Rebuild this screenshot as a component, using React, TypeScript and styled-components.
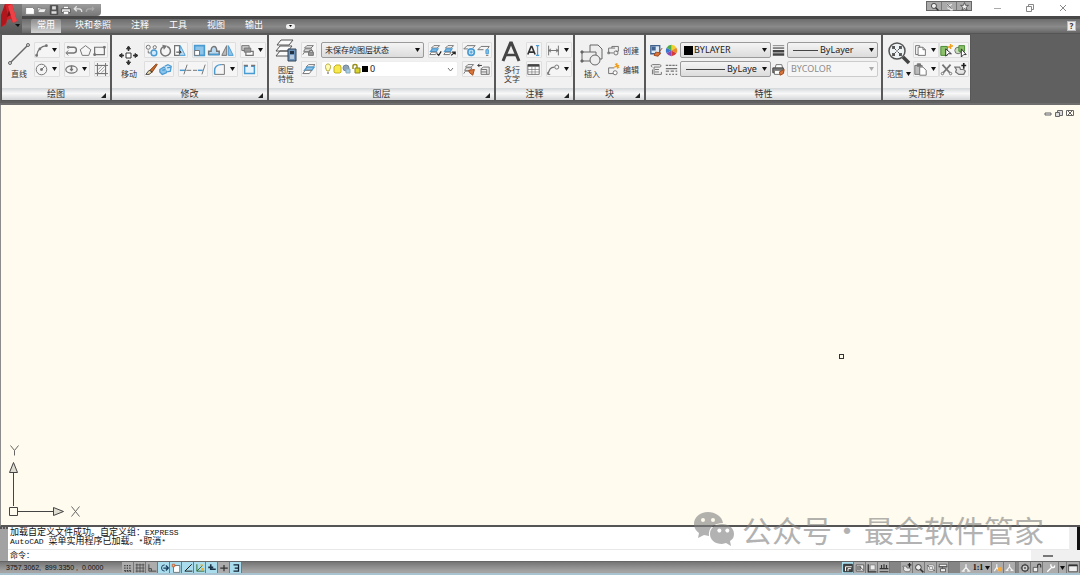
import React from "react";
import styled, { createGlobalStyle, css } from "styled-components";

const GlobalStyle = createGlobalStyle`
  * { box-sizing: border-box; }
  body { margin: 0; background: #fff; }
  button, select, input { font: inherit; color: inherit; margin: 0; padding: 0; border: 0; background: none; }
  body, button, select, input { font-family: "Noto Sans", "Noto Sans CJK SC", sans-serif; }
`;

const G = "#747474";
const B = "#4b9bd3";

/* Small glyphs, all on a 16 x 16 grid */
const glyphs: Record<string, React.ReactNode> = {
  arc: <><path d="M2 14C3 8 7 3 14 2" strokeWidth="1.600" /><path d="M1 13h2v2H1zM13 1h2v2h-2zM5 5h2v2H5z" fill={G} /></>,
  polyline: <><path d="M5 4h6c4 0 4 7 0 7H2" strokeWidth="1.800" /><path d="M4 8l-3 3 3 3M3 3h2v2H3z" /></>,
  polygon: <path d="M8 2l6.500 5-2.500 7h-8L1.500 7z" />,
  rect: <><path d="M2 4h12v9H2z" strokeWidth="1.500" /><path d="M1 12h2v2H1zM13 3h2v2h-2z" fill={G} /></>,
  circle: <><circle cx="8" cy="8" r="6.500" /><path d="M8 8l4-4" /><path d="M7 7h2v2H7z" fill={G} /></>,
  ellipse: <><ellipse cx="8" cy="8" rx="7" ry="4.500" strokeWidth="1.500" /><path d="M8 3v7M6 8h4" strokeWidth="1.800" /></>,
  hatch: <><path d="M3 3h10v10H3zM0 3h16M3 0v16M13 0v16M0 13h16" /><path d="M4 8l4-4M4 12l8-8M8 12l4-4" strokeWidth=".8" /></>,
  copy: <><circle cx="4" cy="4" r="2.500" /><circle cx="12" cy="4" r="2" /><path d="M4 8v3h3" /><circle cx="11" cy="11" r="3.500" stroke={B} fill="#d5ebfa" strokeWidth="1.800" /></>,
  rotate: <><path d="M5 3.500A6 6 0 1 0 10 3" strokeWidth="1.800" /><path d="M4 1l6 1-4 5z" fill={G} stroke="none" /></>,
  stretch: <><path d="M2 2h6v12H2z" fill="#fff" strokeWidth="1.500" /><path d="M9 2l6 12H8z" fill="#b9dcf4" stroke={B} strokeWidth="1.200" /><path d="M4 10h6M8 8l2 2-2 2" stroke="#333" /></>,
  scale: <><path d="M2 2h12v12H2z" fill="#8cc4ea" stroke={B} strokeWidth="2" /><path d="M2 8h6v6H2z" fill="#fff" /></>,
  offset: <><path d="M2 13V9h3c0-8 7-8 7 0h3v4z" fill="#b9dcf4" strokeWidth="1.800" /><path d="M2 13h13" stroke={B} strokeWidth="2" /></>,
  mirror: <><path d="M7 2v12H1z" fill="#bbb" /><path d="M9 2v12h6z" fill="#8cc4ea" stroke={B} /></>,
  order: <><path d="M1 2h9v6H1z" fill="#ccc" /><path d="M6 9h9v5H6z" fill="#fff" strokeWidth="1.500" /><path d="M4 5h8v5H4z" fill="#999" /></>,
  erase: <><path d="M14 1l1 1-6 9-3-2z" fill="#c96a2a" stroke="#8a4517" /><path d="M5 9l4 2-4 3H1z" fill="#eed9a8" stroke="#444" /></>,
  explode: <><path d="M1 8l5-3 4 2-1 5-5 2-3-3z" fill="#8cc4ea" stroke={B} strokeWidth="1.600" /><path d="M7 4l4-2 4 2-1 6-4 1M4 9l4-1M10 6l5-1" stroke={B} fill="#cbe5f7" strokeWidth="1.600" /></>,
  trim: <><path d="M1 9h7" stroke={B} strokeWidth="1.800" /><path d="M9 9h6M10 2L6 14" /></>,
  extend: <><path d="M0 9h5" /><path d="M6 9h6" stroke={B} strokeWidth="1.800" /><path d="M15 2l-4 12" /></>,
  fillet: <><path d="M2 14V9c0-4 3-7 8-7" stroke={B} strokeWidth="1.800" /><path d="M2 14h12V2h-4" /></>,
  join: <><path d="M6 4H2v9h12V4h-4" stroke={B} strokeWidth="1.800" fill="#e6f3fb" /><path d="M6 3h-5M15 3h-5" strokeWidth="2" /></>,
  layerLock: <><path d="M3 5l3-3h8l-3 3zM2 9l2-3h8l-2 3zM1 13l2-3h5" fill="#eee" /><path d="M8 10h6v4H8z" fill="#999" /><path d="M9 10V8h4v2" /></>,
  layers: <><path d="M5 5l3-3h8l-3 3z" fill="#fff" /><path d="M3 9l3-4h9l-3 4z" fill="#8cc4ea" stroke={B} strokeWidth="1.500" /><path d="M1 13l3-4h8l-3 4z" fill="#fff" /></>,
  layersCheck: <><path d="M3 5l3-3h7l-3 3z" fill="#fff" /><path d="M2 9l2-3h7l-2 3z" fill="#8cc4ea" stroke={B} strokeWidth="1.500" /><path d="M1 13l2-3h7l-2 3z" fill="#fff" /><path d="M10 12l2 2 3-5" stroke="#222" strokeWidth="1.500" /></>,
  layersArrow: <><path d="M3 5l3-3h7l-3 3z" fill="#fff" /><path d="M2 9l2-3h7l-2 3z" fill="#8cc4ea" stroke={B} strokeWidth="1.500" /><path d="M1 13l2-3h7l-2 3z" fill="#fff" /><path d="M10 14l5-4M11 10h4v3" stroke="#222" strokeWidth="1.500" /></>,
  layerFreeze: <><path d="M1 6l4-4h10l-3 3M1 6h5" /><circle cx="10" cy="10" r="4" stroke={B} fill="#d5ebfa" strokeWidth="2" /><path d="M8 10h4M10 8v4" stroke={B} /></>,
  layerOff: <><path d="M1 7l4-4h10l-2 3M1 7h7" /><path d="M11 7h3v5h-3z" stroke={B} fill="#8cc4ea" /><path d="M11 14h3" /></>,
  layerBrush: <><path d="M3 5l3-3h7l-3 3zM2 9l2-3h7l-2 3zM1 13l2-3h5" fill="#fff" /><path d="M7 9l7-1-2 7-4-3z" fill="#d9763b" stroke="#a44a1d" /></>,
  layerPrev: <><path d="M1 3h5M3 1L1 3l2 2" stroke="#333" /><path d="M5 7l3-2h7v9H5zM5 8h7M5 11h7M12 8v6" fill="#eee" /></>,
  textEdit: <><path d="M1 13L5 3h1l4 10M3 10h5" stroke="#333" strokeWidth="2" /><path d="M11 2h4M13 2v12M11 14h4" stroke={B} strokeWidth="1.500" /></>,
  dimension: <path d="M2 2v12M14 2v12M2 8h12M5 6L2 8l3 2M11 6l3 2-3 2" />,
  table: <><path d="M1 2h14v12H1z" fill="#fff" /><path d="M1 3h14" stroke="#444" strokeWidth="3" /><path d="M1 8h14M1 11h14M6 4v10M10 4v10" strokeWidth=".8" /></>,
  leader: <><path d="M1 14C3 8 4 5 9 5" strokeWidth="1.500" /><path d="M1 11v3h3" /><circle cx="12" cy="5" r="2.500" /></>,
  blockMake: <><path d="M2 11V5h8M2 11h6" /><path d="M6 5V3h8v6h-3" /><circle cx="11" cy="11" r="2.500" /><path d="M1 10h2v2H1z" /></>,
  blockEdit: <><path d="M9 6H2v7h6" /><circle cx="10" cy="12" r="2.500" fill="#fff" /><path d="M9 5l6-2M12 0l1 7M10 1l5 5" stroke="#f0a020" strokeWidth="1.500" /></>,
  matchProps: <><path d="M1 2h11v10H1z" fill="#dce9f6" stroke="#3f628e" strokeWidth="1.600" /><path d="M2 3h5v5H2z" fill="#3f628e" stroke="none" /><path d="M15 5l-4 5M7 10l6 1-3 4-5-1z" fill="#d9763b" stroke="#a44a1d" /></>,
  wheel: <g stroke="none"><path d="M8 8V1a7 7 0 0 1 6 3.500z" fill="#f0d030" /><path d="M8 8l6-3.500a7 7 0 0 1 0 7z" fill="#e98b2a" /><path d="M8 8l6 3.500A7 7 0 0 1 8 15z" fill="#d43a3a" /><path d="M8 8v7a7 7 0 0 1-6-3.500z" fill="#8b49b5" /><path d="M8 8l-6 3.500a7 7 0 0 1 0-7z" fill="#3b77cf" /><path d="M8 8L2 4.500A7 7 0 0 1 8 1z" fill="#4eae4a" /></g>,
  list: <><path d="M3 2h9c2 0 2 3 0 3H5v9h9v-3M3 2c-2 0-2 3 0 3M6 8h5M6 11h5M3 8v6" /></>,
  weights: <><path d="M1 2h14" strokeWidth="1" /><path d="M1 5h14" strokeWidth="2" /><path d="M1 9h14M1 13h14" strokeWidth="3" stroke="#444" /></>,
  linetypes: <path d="M1 3h3m1 0h3m1 0h3m1 0h2M1 7h14M1 10h4m2 0h4m2 0h2M1 14h2m2 0h2m2 0h2m2 0h2" strokeWidth="1.500" />,
  printer: <><path d="M4 6l1-4h7l1 4" fill="#fff" /><path d="M1 6h13v6H1z" fill="#777" stroke="#444" /><path d="M3 9h8v5H3z" fill="#fff" /><path d="M9 11l6-3-1 5-4 2z" fill="#d9763b" stroke="#a44a1d" /></>,
  copyClip: <><path d="M2 2h5v11H2z" fill="#fff" /><path d="M5 4h6l3 3v7H5z" fill="#fff" /><path d="M11 4v3h3" /></>,
  paste: <><path d="M1 3h9v11H1z" fill="#bbb" /><path d="M4 1h4v3H4z" fill="#777" /><path d="M7 5h4l4 4v6H7z" fill="#fff" /></>,
  quickSelect: <><path d="M1 3h8v11H1z" fill="#8cc06a" stroke="#4b8a34" /><path d="M7 6l7 6h-4l-3 3z" fill="#fff" stroke="#333" /><path d="M10 4l6-2M13 0v6" stroke="#f0a020" strokeWidth="1.800" /></>,
  selectAll: <><circle cx="5" cy="8" r="4" fill="#c8dfbb" /><path d="M6 2h7v7H6z" fill="#8cc06a" stroke="#4b8a34" /><path d="M9 6l6 7h-3l-3 3z" fill="#fff" stroke="#333" /></>,
  cut: <><path d="M3 2l9 10M13 2L4 12" strokeWidth="2.200" /><circle cx="3" cy="13" r="1.500" /><circle cx="13" cy="13" r="1.500" /></>,
  pan: <><path d="M1 5h6l1 3h4l2 2-2 4H6L2 11l1-3z" fill="#e5e5e5" strokeWidth="1.500" /><path d="M12 0v7M9 3h6" stroke="#222" strokeWidth="2" /></>,
  /* quick access */
  fileNew: <path d="M1 4h11l3 3v8H1z" fill="#fff" />,
  fileOpen: <path d="M1 12l3-6h11l-3 6zM1 12V4h5l1 2" fill="#eee" />,
  save: <><path d="M2 1h12v14H2z" fill="#555" stroke="#444" /><path d="M5 2h6v5H5zM4 10h8v4H4z" fill="#ddd" stroke="none" /></>,
  plot: <><path d="M4 2h8v4H4z" fill="#fff" /><path d="M1 6h14v6H1z" fill="#eee" stroke="#444" /><path d="M4 10h8v5H4z" fill="#fff" /></>,
  undo: <path d="M6 2L2 6l4 4M2 6h8c3 0 4 2 4 5" stroke="#e2e2e2" strokeWidth="2" />,
  redo: <path d="M11 3l3 3-3 3M14 6H6c-3 0-4 2-4 5" stroke="#aaa" strokeWidth="2" />,
  search: <><circle cx="7" cy="7" r="4.500" fill="#eee" stroke="#333" strokeWidth="1.500" /><path d="M10 10l5 5" stroke="#333" strokeWidth="2.500" /></>,
  comm: <><path d="M3 3l9 9-1 2-7-4M7 7l5-3M9 14h5" stroke="#eee" strokeWidth="2" /><path d="M3 3l9 9" stroke="#444" /></>,
  star: <path d="M8 1l2 5h5l-4 3.500 1.500 5L8 11.500l-4.500 3 1.500-5L1 6h5z" fill="#eee" stroke="#333" />,
  /* status bar */
  snap: <path d="M3 3v10M7 3v10M11 3v10M3 13h10" strokeDasharray="2 2" stroke="#333" strokeWidth="2" />,
  grid: <path d="M1 3h14M1 8h14M1 13h14M3 1v14M8 1v14M13 1v14" stroke="#444" />,
  ortho: <path d="M3 2v11h12M3 9h4v4" stroke="#444" strokeWidth="1.500" />,
  polar: <><path d="M15 8H7M11 4l4 4-4 4" stroke="#173d5c" strokeWidth="2" /><path d="M9 3a5 5 0 1 0 0 10" stroke="#173d5c" strokeWidth="1.500" /></>,
  osnap: <><path d="M4 4h10v11H4z" fill="#fff" stroke="#555" /><path d="M2 2h4v4H2z" fill="#f3b08b" stroke="#c05a2a" /></>,
  angle: <path d="M14 2L3 13h12" stroke="#222" strokeWidth="1.600" />,
  ducs: <><path d="M3 2v11h12M3 13l9-9" stroke="#3b6f3a" strokeWidth="1.600" /><path d="M10 8h4v4h-4zM9 2h3v3H9z" fill="#f0b030" stroke="none" /></>,
  dyn: <path d="M6 2v8h8M2 7h8" stroke="#1b3347" strokeWidth="2.500" />,
  lwt: <path d="M2 8h12M8 3v10" stroke="#333" strokeWidth="2" />,
  qp: <path d="M4 3h8v10H4M6 8h5" stroke="#123" strokeWidth="2" />,
  modelTab: <><path d="M1 2h14v12H1z" fill="#444" stroke="#222" /><path d="M4 13V6h10M8 13v-4h5" stroke="#fff" strokeWidth="1.500" /></>,
  layoutTab: <><path d="M2 3h12v10H2z" fill="#eee" stroke="#444" /><path d="M4 5h5v6H4z" fill="#888" /><path d="M8 6l5 5" stroke="#333" /></>,
  layoutB: <><path d="M2 2v12h13" stroke="#333" strokeWidth="2" /><path d="M5 3h8v8H5z" fill="#eee" /></>,
  layoutC: <path d="M4 3v6M12 3v6M8 2v8M1 9h14M1 14h14" stroke="#333" strokeWidth="1.800" />,
  wheelNav: <><circle cx="8" cy="8" r="6" fill="#eee" /><circle cx="8" cy="8" r="3" /><path d="M2 4l3 2M11 10l3 3" stroke="#333" /></>,
  motion: <path d="M2 2h12v4H2zM4 9h8v5H4zM7 6v3M1 6h14" fill="#eee" stroke="#444" />,
  person: <path d="M8 2v5M8 7l-5 6M8 7l5 6M1 13h5M10 13h5" stroke="#f2f2f2" strokeWidth="2.200" />,
  personSun: <><path d="M6 2v5M6 7l-4 6M6 7l4 6" stroke="#f2f2f2" strokeWidth="2" /><circle cx="11" cy="10" r="3.500" fill="#f5a93b" stroke="none" /></>,
  gear: <><circle cx="8" cy="8" r="5" fill="#ddd" stroke="#444" strokeWidth="2" /><path d="M8 1v3M8 12v3M1 8h3M12 8h3M3 3l2 2M11 11l2 2" stroke="#444" strokeWidth="1.500" /><circle cx="8" cy="8" r="1.500" fill="#444" /></>,
  lock: <><path d="M2 7h7v7H2z" fill="#eee" stroke="#444" /><path d="M9 7V4c0-3 5-3 5 0v3" stroke="#333" strokeWidth="1.800" /></>,
  wrench: <path d="M2 14l7-7M8 2c-1 3 1 6 5 5l1-3" stroke="#fff" strokeWidth="2.200" />,
  clean: <><path d="M1 3h14v11H1z" fill="#eee" stroke="#333" /><path d="M1 4h14" stroke="#333" strokeWidth="2.500" /></>,
};

const Glyph = ({ name, size = 13 }: { name: string; size?: number }) => (
  <svg width={size} height={size} viewBox="0 0 16 16" fill="none" stroke={G} strokeWidth="1.200" aria-hidden="true">
    {glyphs[name]}
  </svg>
);

const Caret = ({ color = "#111" }: { color?: string }) => (
  <svg width="5" height="4" viewBox="0 0 5 4" aria-hidden="true"><path d="M0 0h5L2.500 4z" fill={color} /></svg>
);

const Page = styled.div`
  display: flex;
  flex-direction: column;
  min-height: 100vh;
  position: relative;
  font-size: 8px;
  line-height: 9px;
  color: #333;
`;

const Header = styled.header`
  display: grid;
  grid-template-columns: 22px 1fr;
  grid-template-rows: 16px 18px;
`;

const AppButton = styled.button`
  grid-row: 1 / 3;
  margin-top: 4px;
  background: linear-gradient(#7d7d7d, #565656);
  display: flex;
`;

const TitleBar = styled.div`
  display: flex;
  justify-content: space-between;
  align-items: flex-end;
`;

const QuickAccess = styled.div`
  display: flex;
  align-items: center;
  height: 12px;
  width: 79px;
  padding-left: 2px;
  background: linear-gradient(#9d9d9d, #777);
  border-radius: 0 0 4px 0;
`;

const QuickButton = styled.button`
  width: 12px;
  height: 12px;
  display: grid;
  place-items: center;
`;

const TitleRight = styled.div`
  display: flex;
  align-self: stretch;
`;

const SearchBar = styled.div`
  display: flex;
  height: 10px;
  width: 46px;
  margin: 1px 9px 0 0;
  background: #aaa;
  border: 1px solid #666;
  button { flex: 1; display: grid; place-items: center; border-right: 1px solid #777; }
  button:last-child { border: 0; }
`;

const WindowButton = styled.button`
  width: 32px;
  height: 15px;
  display: grid;
  place-items: center;
  margin-right: 1px;
`;

const MenuBar = styled.nav`
  display: flex;
  align-items: center;
  padding-left: 5px;
  padding-right: 4px;
  border-top: 3px solid #484848;
  background: linear-gradient(#6d6d6d, #8a8a8a 55%, #666);
  border-bottom: 1px solid #555;
`;

const Tab = styled.button<{ $active?: boolean }>`
  height: 14px;
  margin: 0 4px;
  padding: 0 6px 2px;
  font-size: 9px;
  line-height: 12px;
  color: #fff;
  border-radius: 2px 2px 0 0;
  ${(p) => p.$active && css`background: linear-gradient(#8d8d8d, #d2d2d2);`}
`;

const RibbonToggle = styled.button`
  width: 9px;
  height: 5px;
  margin-left: 13px;
  background: #eee;
  border-radius: 2px;
  display: grid;
  place-items: center;
`;

const HelpButton = styled.button`
  width: 9px;
  height: 10px;
  margin-left: auto;
  background: #eee;
  border: 1px solid #bbb;
  font-size: 8px;
  line-height: 8px;
  font-weight: 700;
`;

const Ribbon = styled.main`
  display: flex;
  gap: 2px;
  padding: 1px 2px 3px;
  background: #606060;
  border-bottom: 2px solid #6e6e6e;
`;

const PanelBox = styled.section<{ $w: number }>`
  width: ${(p) => p.$w}px;
  flex: none;
  display: flex;
  flex-direction: column;
  background: #f1f1f1;
  box-shadow: 0 0 0 1px #585858;
`;

const PanelBody = styled.div`
  display: flex;
  gap: 2px;
  height: 53px;
  padding: 7px 0 0 4px;
`;

const PanelTitle = styled.h2`
  position: relative;
  height: 12px;
  margin: 0;
  font-size: 9px;
  line-height: 12px;
  font-weight: 400;
  text-align: center;
  background: linear-gradient(#d3d7da, #f8f8f8 45%, #d4d6d8);
  svg { position: absolute; right: 4px; bottom: 2px; }
`;

const Panel = ({ title, w, corner = true, children }: { title: string; w: number; corner?: boolean; children: React.ReactNode }) => (
  <PanelBox $w={w}>
    <PanelBody>{children}</PanelBody>
    <PanelTitle>
      {title}
      {corner && <svg width="5" height="5" viewBox="0 0 5 5"><path d="M5 0v5H0z" fill="#222" /></svg>}
    </PanelTitle>
  </PanelBox>
);

const BigButton = styled.button<{ $w: number; $tall?: boolean }>`
  width: ${(p) => p.$w}px;
  flex: none;
  display: flex;
  flex-direction: column;
  align-items: center;
  gap: ${(p) => (p.$tall ? 0 : 3)}px;
  margin-top: ${(p) => (p.$tall ? -3 : 0)}px;
  height: ${(p) => (p.$tall ? 46 : 40)}px;
  svg { flex: none; }
  white-space: nowrap;
`;

const Label = styled.span<{ $drop?: boolean }>`
  display: flex;
  align-items: center;
  justify-content: center;
  gap: 3px;
  padding-top: ${(p) => (p.$drop ? 4 : 0)}px;
`;

const Tools = styled.div`
  display: flex;
  flex-direction: column;
  gap: 3px;
`;

const Row = styled.div<{ $gap?: number }>`
  display: flex;
  gap: ${(p) => p.$gap ?? 4}px;
  height: 16px;
`;

const Group = styled.div`
  display: flex;
  border: 1px solid #dedede;
  border-radius: 1px;
  background: #f5f5f5;
`;

const ToolButton = styled.button<{ $split?: boolean }>`
  width: ${(p) => (p.$split ? 24 : 14)}px;
  height: 14px;
  display: flex;
  align-items: center;
  justify-content: space-between;
  padding-right: ${(p) => (p.$split ? 2 : 0)}px;
  svg { flex: none; }
`;

const PlainButton = styled(ToolButton)`
  height: 16px;
`;

const TextButton = styled.button`
  display: flex;
  align-items: center;
  gap: 3px;
  height: 16px;
`;

type ToolDef = [icon: string, label: string, split?: boolean];

const ToolGroup = ({ tools }: { tools: ToolDef[] }) => (
  <Group>
    {tools.map(([icon, label, split]) => (
      <ToolButton key={label} aria-label={label} $split={split}>
        <Glyph name={icon} />
        {split && <Caret />}
      </ToolButton>
    ))}
  </Group>
);

const ComboBox = styled.label<{ $w: number; $flat?: boolean; $muted?: boolean }>`
  display: flex;
  align-items: center;
  gap: 1px;
  width: ${(p) => p.$w}px;
  height: 16px;
  padding: 0 3px;
  border: 1px solid ${(p) => (p.$flat ? "#eee" : p.$muted ? "#ccc" : "#9a9a9a")};
  border-radius: 2px;
  background: ${(p) => (p.$flat ? "#fff" : p.$muted ? "#f6f6f6" : "linear-gradient(#f4f4f4, #dcdcdc)")};
  color: ${(p) => (p.$muted ? "#8c8c8c" : "#222")};
  svg { flex: none; }
`;

const Select = styled.select<{ $latin?: boolean }>`
  appearance: none;
  flex: 1;
  min-width: 0;
  height: 14px;
  font-size: ${(p) => (p.$latin ? 9 : 8)}px;
  line-height: 14px;
  outline: none;
`;

interface ComboProps { label: string; value: string; w: number; latin?: boolean; flat?: boolean; muted?: boolean; lead?: React.ReactNode }

const Combo = ({ label, value, w, latin, flat, muted, lead }: ComboProps) => (
  <ComboBox $w={w} $flat={flat} $muted={muted}>
    {lead}
    <Select aria-label={label} $latin={latin}><option>{value}</option></Select>
    {flat ? (
      <svg width="7" height="5" viewBox="0 0 7 5"><path d="M1 1l2.500 3L6 1" fill="none" stroke="#777" /></svg>
    ) : <Caret color={muted ? "#aaa" : "#111"} />}
  </ComboBox>
);

const Stroke = ({ w }: { w: number }) => (
  <svg width={w} height="3" aria-hidden="true"><path d={`M2 1.500H${w - 1}`} stroke="#444" strokeWidth="1" /></svg>
);
const Swatch = () => <svg width="9" height="9" aria-hidden="true"><path d="M0 0h9v9H0z" /></svg>;

const LayerState = () => (
  <svg width="44" height="12" viewBox="0 0 44 12" fill="none" strokeWidth="1" aria-hidden="true">
    <path d="M2 8C-1 3 1 1 3 1S7 3 4 8z" fill="#fffbb0" stroke="#b3a83a" /><path d="M2 10h2" stroke="#555" />
    <path d="M9 4l2-2h4l1 2v5l-1 1h-5l-1-1z" fill="#f7e94e" stroke="#c2b022" />
    <circle cx="21" cy="5" r="3" fill="#8fa3b5" stroke="#6f8798" /><path d="M21 6h4v4h-4z" fill="#a9cde6" stroke="#8ab" />
    <path d="M28 6V3c0-2 4-2 4 0v3" stroke="#97901c" strokeWidth="1.500" /><path d="M30 5h5v5h-5z" fill="#d9d42e" stroke="#87811a" />
    <path d="M37 3h6v6h-6z" fill="#000" />
  </svg>
);

const Canvas = styled.section`
  position: relative;
  flex: 1;
  min-height: 240px;
  background: #fffbee;
  border-left: 1px solid #8c8c8c;
  border-bottom: 2px solid #555;
`;

const DocButtons = styled.div`
  display: flex;
  justify-content: flex-end;
  gap: 3px;
  padding: 4px 6px 0 0;
  button { width: 8px; height: 8px; display: grid; place-items: center; }
`;

const Ucs = styled.svg`
  position: absolute;
  left: 5px;
  bottom: 0;
`;

const PickBox = styled.div`
  position: absolute;
  left: 838px;
  top: 249px;
  width: 5px;
  height: 5px;
  border: 1px solid #333;
`;

const CommandWindow = styled.section`
  display: grid;
  grid-template-columns: 8px 1fr 8px 3px;
  grid-template-rows: 23px 11px;
  background: #fff;
`;

const Grip = styled.div`
  grid-row: 1 / 3;
  background: #a2a2a2;
  border-top: 2px dotted #555;
`;

const Log = styled.div`
  padding-left: 2px;
  font-family: "Liberation Mono", "Noto Sans CJK SC", monospace;
  font-size: 9px;
  line-height: 9px;
  border-bottom: 1px solid #e8e8e8;
  color: #111;
  p { margin: 0; padding-top: 1px; height: 9px; white-space: pre; }
`;

const Latin = styled.span`
  font-size: 8px;
`;

const ScrollTrack = styled.div`
  background: #eee;
`;
const ScrollEdge = styled.div`
  background: #111;
`;

const Prompt = styled.label`
  grid-column: 2 / 5;
  display: flex;
  align-items: center;
  padding-left: 2px;
  font-family: "Liberation Mono", "Noto Sans CJK SC", monospace;
  color: #111;
  input { flex: 1; height: 9px; outline: none; }
`;

const PromptCorner = styled.button`
  width: 49px;
  align-self: stretch;
  background: #f0f0f0;
  padding-right: 16px;
  display: grid;
  place-items: center;
`;

const StatusBar = styled.footer`
  display: flex;
  align-items: center;
  height: 14px;
  background: linear-gradient(#757575, #a4a4a4 85%);
  border-top: 1px solid #666;
  border-bottom: 2px solid #a9c4d0;
`;

const Coordinates = styled.output`
  width: 116px;
  margin-left: 6px;
  font-family: "Liberation Sans", sans-serif;
  font-size: 7px;
  color: #111;
  white-space: pre;
`;

const StatusButton = styled.button<{ $on?: boolean; $wide?: number }>`
  width: ${(p) => p.$wide ?? 12}px;
  height: 11px;
  display: flex;
  align-items: center;
  justify-content: center;
  border-right: 1px solid #777;
  background: ${(p) => (p.$on ? "#a9dcec" : "#acacac")};
`;

const StatusGap = styled.span<{ $w: number }>`
  width: ${(p) => p.$w}px;
  height: 11px;
  background: #858585;
`;

const ScaleButton = styled(StatusButton)`
  gap: 2px;
  font-family: "Liberation Serif", serif;
  font-weight: 700;
  color: #111;
`;

const Spacer = styled.span`
  flex: 1;
`;

const Watermark = styled.div`
  position: absolute;
  right: 36px;
  bottom: 28px;
  display: flex;
  align-items: center;
  gap: 8px;
  font-family: "Noto Sans CJK SC", sans-serif;
  font-size: 30px;
  line-height: 36px;
  color: #808080;
  opacity: 0.6;
  pointer-events: none;
`;

const Dot = styled.span`
  display: inline-block;
  width: 32px;
  padding-right: 6px;
  text-align: center;
`;

const toggles: [string, string, boolean][] = [
  ["snap", "捕捉", false], ["grid", "栅格", false], ["ortho", "正交", false], ["polar", "极轴", true],
  ["osnap", "对象捕捉", true], ["angle", "对象追踪", true], ["ducs", "DUCS", true], ["dyn", "DYN", true],
  ["lwt", "线宽", false], ["qp", "快捷特性", true],
];

export default function App() {
  return (
    <Page>
      <GlobalStyle />
      <Header>
        <AppButton aria-label="应用程序菜单">
          <svg width="22" height="28" viewBox="0 0 22 28">
            <path d="M5 0h7l5 17-4 2-2-4-4 1-1 5-5 2z" fill="#cf2228" />
            <path d="M5 0L1 11v12l5-4 2-8z" fill="#b0161c" />
            <path d="M9 6l2 5-4 2z" fill="#701216" />
            <path d="M12 0l5 17-4 2L8 2z" fill="#ec4247" />
            <path d="M15 20h5l-2 3z" fill="#111" />
          </svg>
        </AppButton>
        <TitleBar>
          <QuickAccess>
            {[["fileNew", "新建"], ["fileOpen", "打开"], ["save", "保存"], ["plot", "打印"], ["undo", "放弃"], ["redo", "重做"]].map(([i, l]) => (
              <QuickButton key={i} aria-label={l}><Glyph name={i} size={10} /></QuickButton>
            ))}
          </QuickAccess>
          <TitleRight>
            <SearchBar>
              <button aria-label="搜索"><Glyph name="search" size={9} /></button>
              <button aria-label="通讯中心"><Glyph name="comm" size={9} /></button>
              <button aria-label="收藏夹"><Glyph name="star" size={9} /></button>
            </SearchBar>
            <WindowButton aria-label="最小化"><svg width="8" height="8"><path d="M1 4.500h7" stroke="#aaa" /></svg></WindowButton>
            <WindowButton aria-label="还原"><svg width="8" height="8" fill="none" stroke="#888"><path d="M.5 2.500h5v5h-5zM2.500 2V.5h5v5H6" /></svg></WindowButton>
            <WindowButton aria-label="关闭"><svg width="8" height="8"><path d="M1 1l6 6M7 1L1 7" stroke="#888" /></svg></WindowButton>
          </TitleRight>
        </TitleBar>
        <MenuBar>
          {["常用", "块和参照", "注释", "工具", "视图", "输出"].map((t, i) => <Tab key={t} $active={i === 0}>{t}</Tab>)}
          <RibbonToggle aria-label="最小化功能区"><svg width="3" height="2"><path d="M0 0h3L1.500 2z" /></svg></RibbonToggle>
          <HelpButton aria-label="帮助">?</HelpButton>
        </MenuBar>
      </Header>

      <Ribbon>
        <Panel title="绘图" w={108}>
          <BigButton $w={26}>
            <svg width="24" height="24" viewBox="0 0 24 24" fill="#ddd" stroke="#666"><path d="M3 21L21 3" strokeWidth="1.500" /><circle cx="3" cy="21" r="1.500" /><circle cx="21" cy="3" r="1.500" /></svg>
            <Label>直线</Label>
          </BigButton>
          <Tools>
            <Row><ToolGroup tools={[["arc", "圆弧", true]]} /><ToolGroup tools={[["polyline", "多段线"], ["polygon", "正多边形"], ["rect", "矩形"]]} /></Row>
            <Row><ToolGroup tools={[["circle", "圆", true]]} /><ToolGroup tools={[["ellipse", "椭圆", true]]} /><ToolGroup tools={[["hatch", "图案填充"]]} /></Row>
          </Tools>
        </Panel>

        <Panel title="修改" w={155}>
          <BigButton $w={26}>
            <svg width="22" height="24" viewBox="0 0 22 24" fill="#333" stroke="#333"><path d="M8 11h5v5H8z" fill="#fff" /><path d="M10.500 6v3M10.500 18v3M4 13.500h2M15 13.500h3" strokeWidth="1.500" /><path d="M10.500 4l2 3h-4zM10.500 23l2-3h-4zM1 13.500l3-2v4zM20 13.500l-3-2v4z" /></svg>
            <Label>移动</Label>
          </BigButton>
          <Tools>
            <Row>
              <ToolGroup tools={[["copy", "复制"], ["rotate", "旋转"], ["stretch", "拉伸"]]} />
              <ToolGroup tools={[["scale", "缩放"], ["offset", "偏移"], ["mirror", "镜像"]]} />
              <ToolGroup tools={[["order", "绘图次序", true]]} />
            </Row>
            <Row>
              <ToolGroup tools={[["erase", "删除"], ["explode", "分解"]]} />
              <ToolGroup tools={[["trim", "修剪"], ["extend", "延伸"]]} />
              <ToolGroup tools={[["fillet", "圆角", true]]} />
              <ToolGroup tools={[["join", "打断"]]} />
            </Row>
          </Tools>
        </Panel>

        <Panel title="图层" w={225}>
          <BigButton $w={26} $tall>
            <svg width="24" height="26" viewBox="0 0 24 26" fill="#fafafa" stroke="#555"><path d="M2 17l4-5h12l-4 5zM2 12l4-5h12l-4 5zM3 6l4-5h12l-4 5z" /><path d="M14 10h8v12h-8z" fill="#6d93bb" stroke="#345" /><path d="M16 12h4v3h-4z" fill="#234" stroke="none" /><path d="M16 17h4M16 19h4" stroke="#fff" /></svg>
            <span>图层<br />特性</span>
          </BigButton>
          <Tools>
            <Row>
              <ToolGroup tools={[["layerLock", "锁定图层"]]} />
              <Combo label="图层状态" value="未保存的图层状态" w={103} />
              <ToolGroup tools={[["layersCheck", "置为当前"], ["layersArrow", "匹配图层"]]} />
              <ToolGroup tools={[["layerFreeze", "冻结图层"], ["layerOff", "关闭图层"]]} />
            </Row>
            <Row>
              <ToolGroup tools={[["layers", "隔离图层"]]} />
              <Combo label="图层" value="0" w={137} flat latin lead={<LayerState />} />
              <ToolGroup tools={[["layerBrush", "图层漫游"], ["layerPrev", "上一个图层"]]} />
            </Row>
          </Tools>
        </Panel>

        <Panel title="注释" w={77}>
          <BigButton $w={24} $tall>
            <svg width="22" height="26" viewBox="0 0 22 26" fill="none" stroke="#444"><path d="M2 22L9.500 4h1L18 22" strokeWidth="3" /><path d="M5 16h10" strokeWidth="2.500" /></svg>
            <span>多行<br />文字</span>
          </BigButton>
          <Tools>
            <Row><ToolGroup tools={[["textEdit", "单行文字"]]} /><ToolGroup tools={[["dimension", "标注", true]]} /></Row>
            <Row><ToolGroup tools={[["table", "表格"]]} /><ToolGroup tools={[["leader", "多重引线", true]]} /></Row>
          </Tools>
        </Panel>

        <Panel title="块" w={69}>
          <BigButton $w={26}>
            <svg width="24" height="24" viewBox="0 0 24 24" fill="#eee" stroke="#666"><path d="M10 3h8l4 4v10H10z" /><path d="M2 10h14v9H2z" /><circle cx="15" cy="18" r="5" /><path d="M1 9h2v2H1zM1 18h2v2H1z" fill="#666" /></svg>
            <Label>插入</Label>
          </BigButton>
          <Tools>
            <TextButton><Glyph name="blockMake" />创建</TextButton>
            <TextButton><Glyph name="blockEdit" />编辑</TextButton>
          </Tools>
        </Panel>

        <Panel title="特性" w={235} corner={false}>
          <Tools>
            <Row $gap={1}>
              <PlainButton aria-label="特性匹配"><Glyph name="matchProps" /></PlainButton>
              <PlainButton as="span"><Glyph name="wheel" /></PlainButton>
              <Combo label="颜色" value="BYLAYER" w={91} latin lead={<Swatch />} />
              <PlainButton as="span"><Glyph name="weights" /></PlainButton>
              <Combo label="线宽" value="ByLayer" w={91} latin lead={<Stroke w={28} />} />
            </Row>
            <Row $gap={1}>
              <PlainButton aria-label="列表"><Glyph name="list" /></PlainButton>
              <PlainButton as="span"><Glyph name="linetypes" /></PlainButton>
              <Combo label="线型" value="ByLaye" w={91} latin lead={<Stroke w={42} />} />
              <PlainButton as="span"><Glyph name="printer" /></PlainButton>
              <Combo label="打印样式" value="BYCOLOR" w={91} latin muted />
            </Row>
          </Tools>
        </Panel>

        <Panel title="实用程序" w={87} corner={false}>
          <BigButton $w={24} $tall>
            <svg width="24" height="26" viewBox="0 0 24 26" fill="none" stroke="#555"><circle cx="10" cy="12" r="8" fill="#eef3f5" strokeWidth="1.500" /><path d="M16 18l6 6" strokeWidth="3.500" stroke="#444" /><path d="M7 9l2 2M13 9l-2 2M7 15l2-2M13 15l-2-2M9 12h2" /><path d="M6 10V8h2M12 8h2v2M6 14v2h2M12 16h2v-2" strokeWidth="1.800" /></svg>
            <Label $drop>范围<Caret /></Label>
          </BigButton>
          <Tools>
            <Row $gap={0}><ToolGroup tools={[["copyClip", "复制剪裁", true]]} /><ToolGroup tools={[["quickSelect", "快速选择"], ["selectAll", "全部选择"]]} /></Row>
            <Row $gap={0}><ToolGroup tools={[["paste", "粘贴", true]]} /><ToolGroup tools={[["cut", "剪切"], ["pan", "平移"]]} /></Row>
          </Tools>
        </Panel>
      </Ribbon>

      <Canvas aria-label="绘图区">
        <DocButtons>
          <button aria-label="最小化图形"><svg width="8" height="8"><path d="M1 4h6v2H1z" fill="#eee" stroke="#666" /></svg></button>
          <button aria-label="还原图形"><svg width="8" height="8" fill="#ddd" stroke="#666"><path d="M2.500 1.500h5v5h-5z" /><path d="M.5 3.500h4v4h-4z" /></svg></button>
          <button aria-label="关闭图形"><svg width="8" height="8" fill="none" stroke="#666"><path d="M.5 1.500h7v5h-7zM2 2l4 4M6 2L2 6" /></svg></button>
        </DocButtons>
        <PickBox />
        <Ucs width="76" height="80" viewBox="0 0 76 80" fill="none" stroke="#444">
          <path d="M7.500 61V28M11 66.500h38M3.500 62.500h8v8h-8z" />
          <path d="M7.500 17.500l4 10h-8zM57.500 66.500l-10-4v8z" fill="#dedbd0" />
          <path d="M4.500 .5l4 5 4-5M8.500 5.500v5M65.500 61.500l8 10M73.500 61.500l-8 10" stroke="#666" />
        </Ucs>
      </Canvas>

      <CommandWindow>
        <Grip />
        <Log>
          <p>加载自定义文件成功。自定义组：<Latin>EXPRESS</Latin></p>
          <p><Latin>AutoCAD </Latin>菜单实用程序已加载。<Latin>*</Latin>取消<Latin>*</Latin></p>
        </Log>
        <ScrollTrack />
        <ScrollEdge />
        <Prompt>
          命令：
          <input aria-label="命令" />
          <PromptCorner aria-label="折叠"><svg width="10" height="2"><path d="M0 1h10" stroke="#777" strokeWidth="2" /></svg></PromptCorner>
        </Prompt>
      </CommandWindow>

      <StatusBar>
        <Coordinates>3757.3062,  899.3350 ,  0.0000</Coordinates>
        {toggles.map(([i, l, on]) => <StatusButton key={i} aria-label={l} $on={on}><Glyph name={i} size={10} /></StatusButton>)}
        <Spacer />
        <StatusButton aria-label="模型" $on><Glyph name="modelTab" size={10} /></StatusButton>
        <StatusButton aria-label="布局"><Glyph name="layoutTab" size={10} /></StatusButton>
        <StatusButton aria-label="快速查看布局"><Glyph name="layoutB" size={10} /></StatusButton>
        <StatusButton aria-label="快速查看图形"><Glyph name="layoutC" size={10} /></StatusButton>
        <StatusGap $w={11} />
        <StatusButton aria-label="平移视图"><Glyph name="pan" size={10} /></StatusButton>
        <StatusButton aria-label="缩放视图"><Glyph name="search" size={10} /></StatusButton>
        <StatusButton aria-label="控制盘"><Glyph name="wheelNav" size={10} /></StatusButton>
        <StatusButton aria-label="运动显示"><Glyph name="motion" size={10} /></StatusButton>
        <StatusGap $w={11} />
        <ScaleButton $wide={32}><Glyph name="person" size={10} />1:1<Caret /></ScaleButton>
        <StatusButton aria-label="注释可见性"><Glyph name="personSun" size={10} /></StatusButton>
        <StatusButton aria-label="自动缩放"><Glyph name="person" size={9} /></StatusButton>
        <StatusGap $w={3} />
        <StatusButton aria-label="工作空间"><Glyph name="gear" size={10} /></StatusButton>
        <StatusButton aria-label="锁定"><Glyph name="lock" size={10} /></StatusButton>
        <StatusButton aria-label="设置" $wide={16}><Glyph name="wrench" size={10} /></StatusButton>
        <StatusButton aria-label="状态栏菜单" $wide={8}><Caret /></StatusButton>
        <StatusButton aria-label="全屏显示" $wide={13}><Glyph name="clean" size={10} /></StatusButton>
      </StatusBar>

      <Watermark>
        <svg width="40" height="34" viewBox="0 0 40 34" fill="#808080">
          <path fillRule="evenodd" d="M14 0C6 0 0 5 0 12c0 4 2 7 5 9l-1 5 6-3 5 1c-1-8 5-13 14-13C28 4 21 0 14 0zM9 6a2 2 0 1 1 0 4 2 2 0 0 1 0-4zm10 0a2 2 0 1 1 0 4 2 2 0 0 1 0-4z" />
          <path fillRule="evenodd" d="M28 12c-7 0-12 4-12 10s5 10 12 10l4-1 5 3-1-5c3-2 4-4 4-7 0-6-5-10-12-10zm-4 5a2 2 0 1 1 0 3 2 2 0 0 1 0-3zm8 0a2 2 0 1 1 0 3 2 2 0 0 1 0-3z" />
        </svg>
        <span>公众号<Dot>·</Dot>最全软件管家</span>
      </Watermark>
    </Page>
  );
}
